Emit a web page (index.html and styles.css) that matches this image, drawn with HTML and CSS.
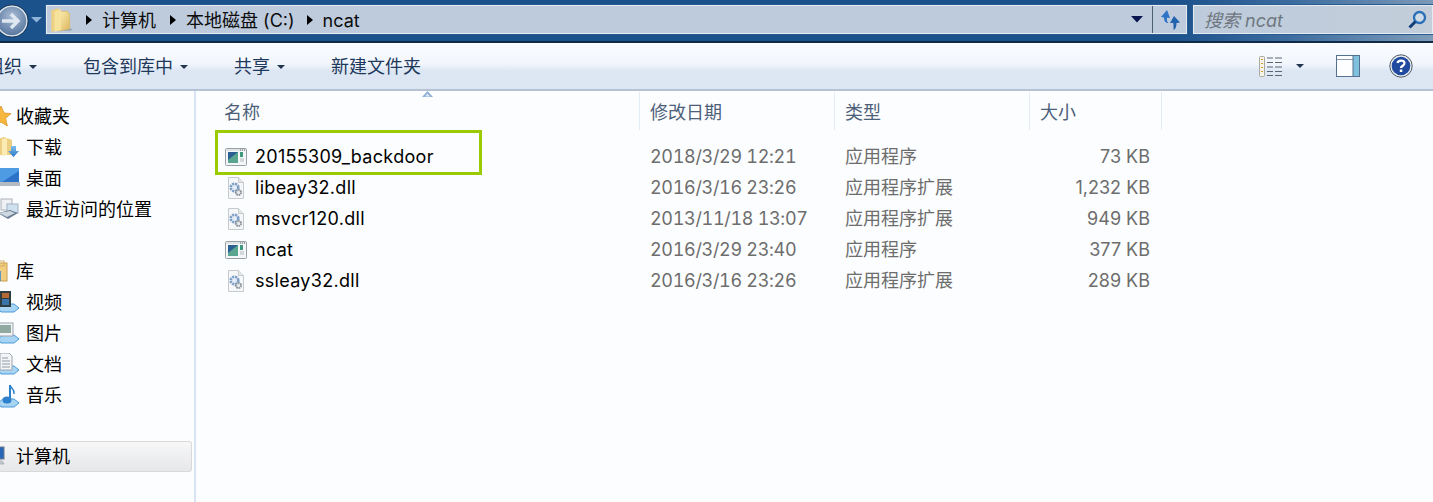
FILE: index.html
```html
<!DOCTYPE html>
<html lang="zh">
<head>
<meta charset="utf-8">
<title>ncat</title>
<link rel="stylesheet" href="styles.css">
</head>
<body>
<svg class="defs" width="0" height="0" aria-hidden="true">
  <defs>
    <linearGradient id="gf" x1="0" y1="0" x2="1" y2="1"><stop offset="0" stop-color="#fdf0b8"/><stop offset="1" stop-color="#dcb65c"/></linearGradient>
    <linearGradient id="gb" x1="0" y1="0" x2="0" y2="1"><stop offset="0" stop-color="#7cc0f0"/><stop offset="1" stop-color="#2a76c4"/></linearGradient>
    <symbol id="app" viewBox="0 0 22 18">
      <rect x=".5" y=".5" width="21" height="17" rx="1" fill="#f4f6f7" stroke="#9aa1a6"/>
      <rect x="1" y="1" width="20" height="2" fill="#dfe3e6"/>
      <path d="M15 2h1M17 2h1M19 2h1" stroke="#666"/>
      <rect x="3" y="4" width="10" height="11" fill="#5aa590"/>
      <path d="M3 4h10L3 12z" fill="#2b5f93"/>
      <rect x="15" y="4" width="3" height="5" fill="#3f9a7c"/>
      <path d="M15 11h4M15 13h4" stroke="#b2b9be"/>
    </symbol>
    <symbol id="dll" viewBox="0 0 18 22">
      <path d="M1.500.5h10l5 5v16h-15z" fill="#f6f7f8" stroke="#c4cace"/>
      <path d="M11.500 .5v5h5" fill="#e4e8ea" stroke="#c4cace"/>
      <circle cx="7.500" cy="10.500" r="3.800" fill="#e4edf7" stroke="#7f9fc6" stroke-width="2.600" stroke-dasharray="2.200 .8"/>
      <circle cx="11.500" cy="15.500" r="2.600" fill="#e8ebee" stroke="#89929b" stroke-width="2" stroke-dasharray="1.600 .7"/>
    </symbol>
    <symbol id="folder" viewBox="0 0 22 24">
      <path d="M8 4l9 0 2 3v14l-11 1z" fill="url(#gf)" stroke="#d8b665" stroke-width=".7"/>
      <path d="M2 3l7-2v19l-7 3z" fill="#ecd084"/>
      <path d="M5 4l6-2v19l-6 2z" fill="#f7e29c"/>
      <path d="M12 22l8-2 2 0-2 2z" fill="#9aa6b3"/>
    </symbol>
  </defs>
</svg>

<div class="window">
  <header class="addressbar">
    <div class="nav-buttons">
      <svg class="back" width="34" height="34" viewBox="0 0 34 34">
        <defs><radialGradient id="gback" cx=".5" cy=".35" r=".7"><stop offset="0" stop-color="#a9bcd4"/><stop offset="1" stop-color="#4f6f99"/></radialGradient></defs>
        <circle cx="17" cy="17" r="15" fill="url(#gback)" stroke="#dfe5ec" stroke-width="1.500"/>
        <circle cx="17" cy="17" r="16.300" fill="none" stroke="#1d3a58" stroke-width="1"/>
        <path d="M7 17h16M16 10l7 7-7 7" fill="none" stroke="#dfe7f0" stroke-width="3.400"/>
      </svg>
      <svg class="back-arrow" width="11" height="6" viewBox="0 0 11 6"><path d="M0 0h11L5.500 5.500z" fill="#8fb4da"/></svg>
    </div>
    <div class="path-box">
      <svg class="path-folder" width="24" height="26"><use href="#folder"/></svg>
      <span class="crumb-arrow"></span><span class="crumb crumb-1">计算机</span>
      <span class="crumb-arrow"></span><span class="crumb crumb-2">本地磁盘 (C:)</span>
      <span class="crumb-arrow"></span><span class="crumb">ncat</span>
      <span class="path-spacer"></span>
      <svg class="path-drop" width="12" height="7" viewBox="0 0 12 7"><path d="M0 0h12L6 6.500z" fill="#0a1550"/></svg>
      <span class="refresh">
        <svg width="22" height="22" viewBox="0 0 22 22">
          <path d="M8 1L2 8l3 .5c0 3 1 5 3 5.500 1 .2 1 0 1-.5-1-1-1.200-3-1-4.800L11 9z" fill="#2e74c6"/>
          <path d="M15 7l6 6.500-3.500.5c0 3-.5 5-2.500 7-.5-1-.5-1-.5-2 0-2 0-3-.2-5L11 14z" fill="#1f62ad"/>
        </svg>
      </span>
    </div>
    <div class="search-box">
      <span class="search-text">搜索 ncat</span>
      <svg class="search-icon" width="20" height="20" viewBox="0 0 20 20">
        <circle cx="12.500" cy="7.500" r="5.500" fill="#dbe7f3" fill-opacity=".5" stroke="#2a6fb8" stroke-width="2.300"/>
        <path d="M8.500 11.500l-6 6" stroke="#123f7a" stroke-width="3"/>
      </svg>
    </div>
  </header>

  <nav class="toolbar">
    <span class="tool tool-org">组织<i class="caret"></i></span>
    <span class="tool">包含到库中<i class="caret"></i></span>
    <span class="tool">共享<i class="caret"></i></span>
    <span class="tool">新建文件夹</span>
    <span class="tool-spacer"></span>
    <svg class="view-icon" width="24" height="21" viewBox="0 0 24 21">
      <rect x=".5" y=".5" width="5" height="20" rx="1" fill="#f7f3e6" stroke="#a9a9a3"/>
      <path d="M2 3.500h2M2 7.500h2M2 11.500h2M2 15.500h2" stroke="#d59a3a"/>
      <path d="M8 2h6M16 2h7M8 6.500h6M16 6.500h7M8 11h6M16 11h7M8 15.500h6M16 15.500h7M8 19.500h6M16 19.500h7" stroke="#5b6776"/>
    </svg>
    <i class="caret caret-view"></i>
    <svg class="pane-icon" width="24" height="22" viewBox="0 0 24 22">
      <rect x=".5" y=".5" width="23" height="21" fill="#fdfeff" stroke="#56718f"/>
      <path d="M1 4.500h16" stroke="#8a9bb0"/>
      <rect x="17" y="1" width="6" height="20" fill="#7fc0de"/>
      <path d="M17 .5v21" stroke="#56718f"/>
    </svg>
    <svg class="help-icon" width="24" height="24" viewBox="0 0 24 24">
      <circle cx="12" cy="12" r="11.200" fill="#e8ecef" stroke="#4d5a68"/>
      <circle cx="12" cy="12" r="9.300" fill="#1f4aa0"/>
      <path d="M8.500 9c.5-3 6.500-3.500 7 0 .3 2.500-3.500 2.800-3.500 5" fill="none" stroke="#fff" stroke-width="2.300"/>
      <rect x="10.800" y="15.500" width="2.500" height="2.500" fill="#fff"/>
    </svg>
  </nav>

  <div class="main">
    <aside class="sidebar">
      <ul class="group">
        <li class="nav-item top">
          <svg class="nav-icon" width="22" height="22" viewBox="0 0 22 22"><path d="M11 1l3 7 7 .6-5.400 4.700L17.300 21 11 17l-6.300 4 1.700-7.700L1 8.600 8 8z" fill="#f6b73c" stroke="#dc9326" stroke-width=".8"/></svg>
          <span>收藏夹</span>
        </li>
        <li class="nav-item">
          <svg class="nav-icon" width="22" height="22" viewBox="0 0 22 22"><path d="M0 3l6-2 8 3v15H0z" fill="#eccf80"/><path d="M4 3l5-1v17l-5 1z" fill="#fbeab4"/><path d="M13 10h5v5h3l-5.500 6L10 15h3z" fill="url(#gb)"/></svg>
          <span>下载</span>
        </li>
        <li class="nav-item">
          <svg class="nav-icon" width="22" height="20" viewBox="0 0 22 20"><rect y="1" width="21" height="14" fill="#2b72c8"/><path d="M0 1h21v3L4 15H0z" fill="#4e9be4"/><rect y="15" width="22" height="4" fill="#b4bac2"/></svg>
          <span>桌面</span>
        </li>
        <li class="nav-item">
          <svg class="nav-icon" width="22" height="22" viewBox="0 0 22 22"><rect x="3" y="1" width="11" height="11" fill="#eef1f4" stroke="#aab2ba"/><rect x="9" y="6" width="11" height="9" fill="#cfe0ef" stroke="#9fb0c0"/><path d="M0 15l12-3 8 3-10 6z" fill="#6a7d92"/><path d="M1 15l11-2 5 2-8 4z" fill="#cfd8e2"/></svg>
          <span>最近访问的位置</span>
        </li>
      </ul>
      <ul class="group">
        <li class="nav-item top">
          <svg class="nav-icon" width="20" height="24" viewBox="0 0 20 24"><rect x="1" y="3" width="16" height="18" fill="#f1cd80" stroke="#c99f50"/><rect x="4" y="1" width="10" height="5" fill="none" stroke="#d3ad62"/><rect x="2" y="11" width="9" height="10" fill="#5f96c8"/></svg>
          <span>库</span>
        </li>
        <li class="nav-item">
          <svg class="nav-icon" width="22" height="22" viewBox="0 0 22 22"><path d="M0 17l5-4h11l5 4-5 4H3z" fill="#a7d4f2" stroke="#4a9ada"/><rect x="2" y="0" width="11" height="16" fill="#2f3c42"/><rect x="4" y="2" width="7" height="5" fill="#b56a33"/><rect x="4" y="8" width="7" height="6" fill="#3b74a8"/></svg>
          <span>视频</span>
        </li>
        <li class="nav-item">
          <svg class="nav-icon" width="22" height="22" viewBox="0 0 22 22"><path d="M0 17l5-4h11l5 4-5 4H3z" fill="#a7d4f2" stroke="#4a9ada"/><rect x="0" y="1" width="15" height="13" fill="#f2f4f6" stroke="#98a3ad"/><rect x="2" y="3" width="11" height="8" fill="#8fa9a0"/></svg>
          <span>图片</span>
        </li>
        <li class="nav-item">
          <svg class="nav-icon" width="22" height="22" viewBox="0 0 22 22"><path d="M0 17l5-4h11l5 4-5 4H3z" fill="#a7d4f2" stroke="#4a9ada"/><path d="M2 0h9l3 3v14H2z" fill="#f4f5f7" stroke="#9aa4ad"/><path d="M4 5h6M4 8h8M4 11h8M4 14h8" stroke="#8f99a3"/></svg>
          <span>文档</span>
        </li>
        <li class="nav-item">
          <svg class="nav-icon" width="22" height="24" viewBox="0 0 22 24"><path d="M0 19l5-4h11l5 4-5 4H3z" fill="#a7d4f2" stroke="#4a9ada"/><path d="M12 1v14" stroke="#2f80cc" stroke-width="2"/><path d="M12 1c1 4 5 4 4 9" fill="none" stroke="#2f80cc" stroke-width="1.500"/><ellipse cx="9" cy="16" rx="4.500" ry="3.500" fill="#2f80cc"/></svg>
          <span>音乐</span>
        </li>
      </ul>
      <ul class="group">
        <li class="nav-item top selected">
          <svg class="nav-icon" width="18" height="20" viewBox="0 0 18 20"><rect x="0" y="1" width="14" height="12" fill="#2a66b8" stroke="#6f7b88"/><path d="M2 3l6 0-6 7z" fill="#6fb0ea"/><path d="M0 15h12l2 3H0z" fill="#c6cdd4" stroke="#8d96a0" stroke-width=".6"/></svg>
          <span>计算机</span>
        </li>
      </ul>
    </aside>

    <section class="files">
      <svg class="sort-arrow" width="11" height="6" viewBox="0 0 11 6"><path d="M5.500 0L11 6H0z" fill="#8fb0d6"/><path d="M5.500 2.500L8 5.500H3z" fill="#dbe8f6"/></svg>
      <div class="grid header-row">
        <div class="hcell">名称</div>
        <div class="hcell">修改日期</div>
        <div class="hcell">类型</div>
        <div class="hcell">大小</div>
      </div>
      <div class="rows">
        <div class="annotation"></div>
        <div class="grid row">
          <div class="name"><svg class="file-icon" width="22" height="18"><use href="#app"/></svg><span class="fname">20155309_backdoor</span></div>
          <div class="cell date">2018/3/29 12:21</div>
          <div class="cell">应用程序</div>
          <div class="cell size">73 KB</div>
        </div>
        <div class="grid row">
          <div class="name"><svg class="file-icon" width="22" height="22"><use href="#dll"/></svg><span class="fname">libeay32.dll</span></div>
          <div class="cell date">2016/3/16 23:26</div>
          <div class="cell">应用程序扩展</div>
          <div class="cell size">1,232 KB</div>
        </div>
        <div class="grid row">
          <div class="name"><svg class="file-icon" width="22" height="22"><use href="#dll"/></svg><span class="fname">msvcr120.dll</span></div>
          <div class="cell date">2013/11/18 13:07</div>
          <div class="cell">应用程序扩展</div>
          <div class="cell size">949 KB</div>
        </div>
        <div class="grid row">
          <div class="name"><svg class="file-icon" width="22" height="18"><use href="#app"/></svg><span class="fname">ncat</span></div>
          <div class="cell date">2016/3/29 23:40</div>
          <div class="cell">应用程序</div>
          <div class="cell size">377 KB</div>
        </div>
        <div class="grid row">
          <div class="name"><svg class="file-icon" width="22" height="22"><use href="#dll"/></svg><span class="fname">ssleay32.dll</span></div>
          <div class="cell date">2016/3/16 23:26</div>
          <div class="cell">应用程序扩展</div>
          <div class="cell size">289 KB</div>
        </div>
      </div>
    </section>
  </div>
</div>
</body>
</html>
```
FILE: styles.css
```css
* { box-sizing: border-box; }
html, body { margin: 0; height: 100%; overflow: hidden; }
body {
  font-family: "Inter", "Noto Sans CJK SC", sans-serif;
  font-size: 18px;
  line-height: 24px;
  color: #000;
  background: #fcfdfe;
}
.defs { display: block; height: 0; }
.window { width: 1433px; height: 502px; display: flex; flex-direction: column; overflow: hidden; }

.addressbar {
  flex: none;
  height: 43px;
  display: flex;
  align-items: center;
  padding: 0 0 2px 0;
  gap: 6px;
  background: linear-gradient(100deg, #1c528c 0%, #1c528c 82%, #3d6d9f 90%, #7f9cb9 100%);
  border-bottom: 2px solid #0f2b47;
}
.nav-buttons { display: flex; align-items: center; width: 40px; margin-left: -5px; margin-right: 5px; flex: none; }
.back { flex: none; margin-top: 2px; }
.back-arrow { flex: none; margin-left: 2px; }
.path-box {
  width: 1141px;
  height: 29px;
  display: flex;
  align-items: center;
  background: #bdcbdc;
  border: 1px solid #e4ebf2;
  box-shadow: 0 0 0 1px #2a5b90;
  padding: 0 0 0 2px;
  color: #0c0c0c;
  flex: none;
}
.path-folder { margin-right: 13px; flex: none; }
.crumb { white-space: nowrap; padding-top: 2px; }
.crumb-arrow { width: 0; height: 0; border-left: 6px solid #000; border-top: 5px solid transparent; border-bottom: 5px solid transparent; flex: none; margin-right: 10px; }
.crumb-1 { margin-right: 14px; }
.crumb-2 { margin-right: 12px; }
.path-spacer { flex: 1; }
.path-drop { flex: none; margin-right: 9px; }
.refresh { width: 34px; height: 27px; border-left: 1px solid #4c5f73; display: flex; align-items: center; justify-content: center; flex: none; }
.search-box {
  flex: 1;
  height: 29px;
  display: flex;
  align-items: center;
  justify-content: space-between;
  background: linear-gradient(90deg, #bdcbdc, #c3ceda);
  border: 1px solid #e4ebf2;
  box-shadow: 0 0 0 1px #2a5b90;
  padding: 0 5px 0 10px;
  min-width: 0;
}
.search-text { font-style: italic; color: #6f7780; white-space: nowrap; padding-top: 2px; }

.toolbar {
  flex: none;
  height: 48px;
  display: flex;
  align-items: center;
  background: linear-gradient(#fafcff 0%, #f2f6fc 45%, #dde7f4 60%, #dce6f3 100%);
  border-bottom: 2px solid #b5c2d3;
  color: #1e395b;
}
.tool { display: inline-flex; align-items: center; white-space: nowrap; margin-right: 46px; padding-top: 2px; }
.tool-org { margin-left: -14px; }
.caret { display: inline-block; width: 0; height: 0; border-top: 4px solid #22354f; border-left: 4px solid transparent; border-right: 4px solid transparent; margin-left: 7px; }
.tool-spacer { flex: 1; }
.view-icon { flex: none; }
.caret-view { margin-left: 13px; }
.pane-icon { flex: none; margin-left: 32px; }
.help-icon { flex: none; margin-left: 29px; margin-right: 20px; }

.main { flex: 1; display: flex; min-height: 0; }
.sidebar {
  flex: none;
  width: 196px;
  border-right: 2px solid #d8e4f4;
  background: #fcfdfe;
  padding: 10px 2px 0 0;
  overflow: hidden;
}
.group { list-style: none; margin: 0 0 31px; padding: 0; }
.nav-item {
  height: 31px;
  display: flex;
  align-items: center;
  padding-left: 26px;
  position: relative;
  white-space: nowrap;
  color: #000;
}
.nav-item.top { padding-left: 16px; }
.nav-icon { position: absolute; left: -2px; top: 4px; }
.nav-item.top .nav-icon { left: -10px; }
.nav-item.selected {
  background: linear-gradient(#f7f7f8, #e6e7e9);
  border: 1px solid #d9d9db;
  border-left: 0;
  border-radius: 0 3px 3px 0;
  margin-top: -1px;
}

.files { flex: 1; position: relative; padding-top: 1px; min-width: 0; }
.sort-arrow { position: absolute; left: 226px; top: 0; }
.grid { display: grid; grid-template-columns: 444px 195px 195px 132px; }
.header-row { height: 38px; }
.hcell {
  padding: 9px 0 0 10px;
  color: #4c607a;
  border-right: 1px solid #e3ebf5;
}
.hcell:first-child { padding-left: 28px; }
.rows { position: relative; padding-top: 11px; }
.row { height: 31px; align-items: center; }
.name { display: flex; align-items: center; padding-left: 29px; white-space: nowrap; color: #000; }
.fname { letter-spacing: .3px; }
.file-icon { flex: none; margin-right: 8px; }
.cell { padding-left: 10px; color: #6d6d6d; white-space: nowrap; }
.date { font-variant-numeric: tabular-nums; letter-spacing: -.32px; }
.cell.size { padding: 0 12px 0 0; text-align: right; }
.annotation {
  position: absolute;
  left: 19px;
  top: 0;
  width: 267px;
  height: 45px;
  border: 3px solid #9bca00;
}
```
